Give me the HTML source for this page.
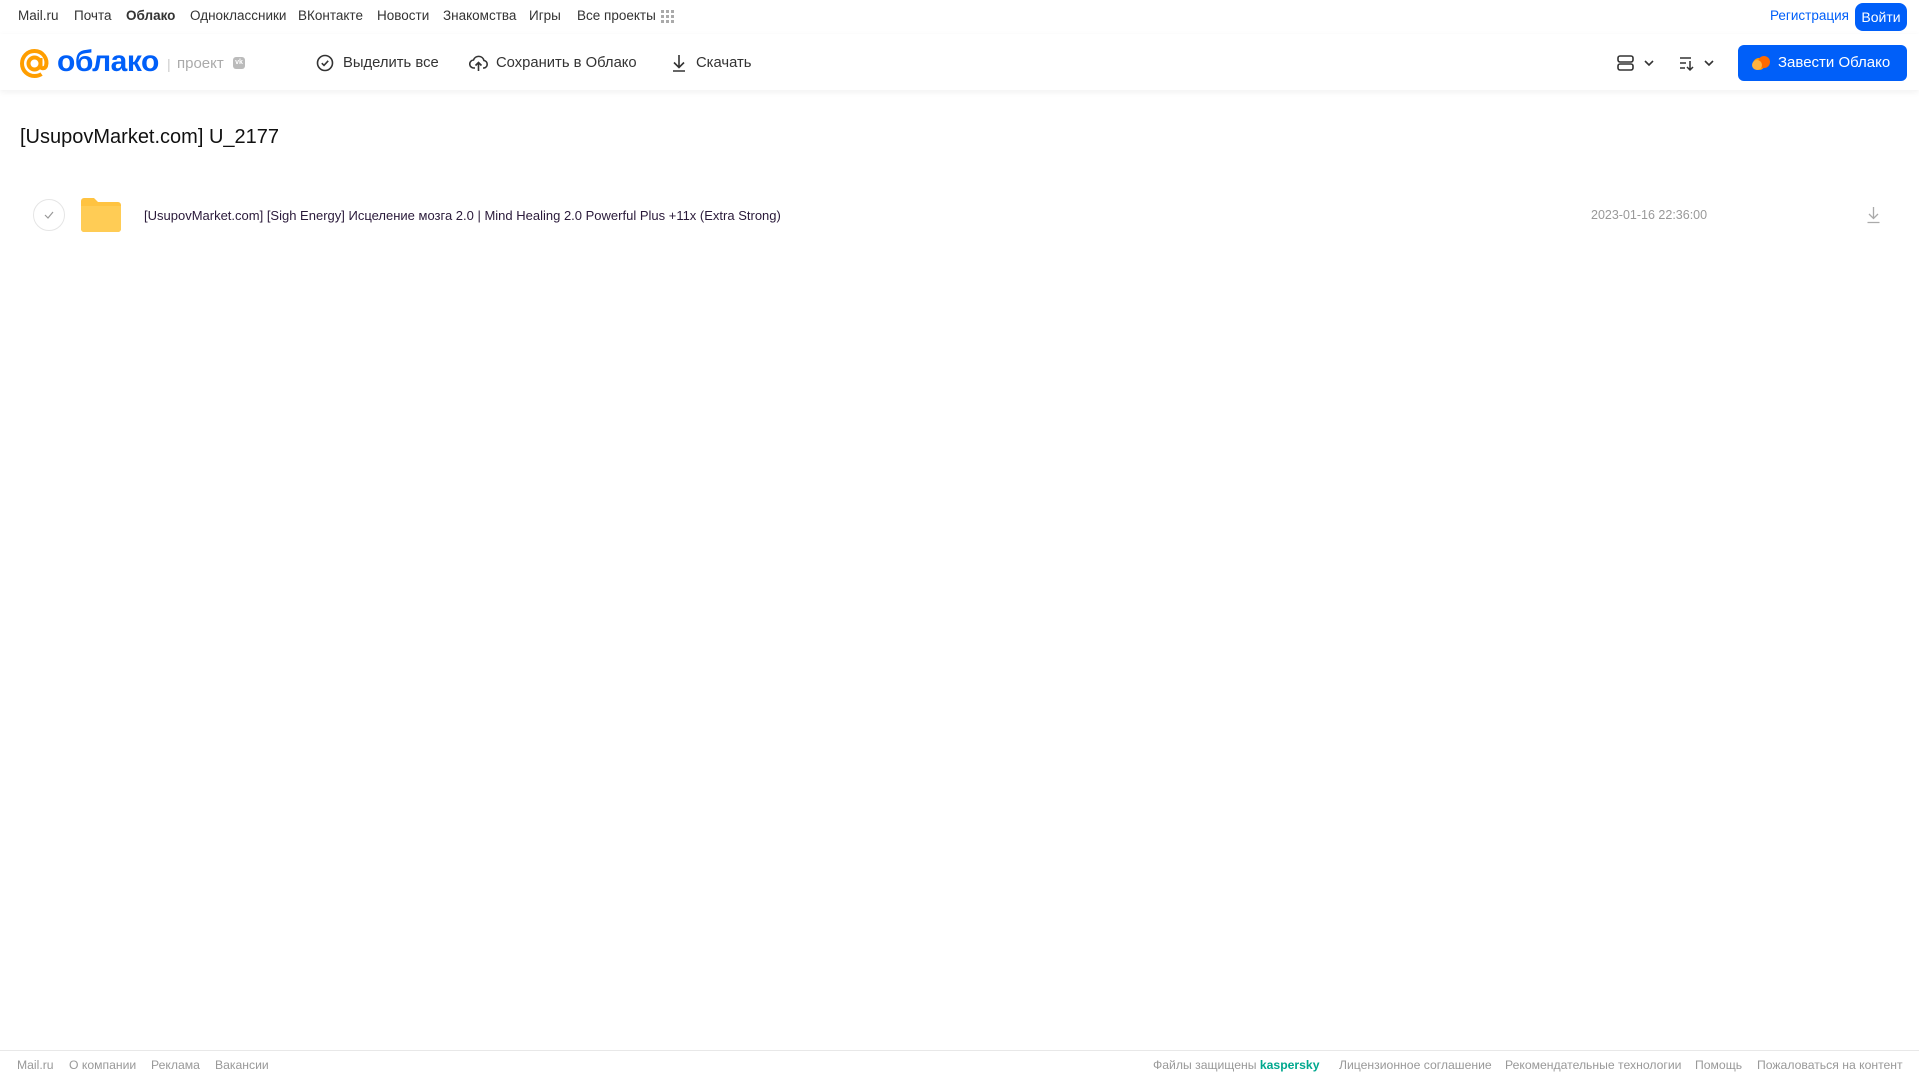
<!DOCTYPE html>
<html><head><meta charset="utf-8"><style>
*{margin:0;padding:0;box-sizing:border-box}
body{width:1919px;height:1079px;background:#fff;font-family:"Liberation Sans",sans-serif;position:relative;overflow:hidden;color:#2c2d2e}
.a{position:absolute;white-space:nowrap}
.top{font-size:13.5px;top:8px;color:#333}
.hdr{position:absolute;left:0;top:34px;width:1919px;height:56px;box-shadow:0 2px 6px rgba(0,0,0,0.06)}
.tb{font-size:14.8px;color:#333;top:55px}
.ft{font-size:12.2px;color:#999;top:1058px}
</style></head><body>
<div class="a top" style="left:18px">Mail.ru</div>
<div class="a top" style="left:74px">Почта</div>
<div class="a top" style="left:126px;font-weight:bold">Облако</div>
<div class="a top" style="left:190px">Одноклассники</div>
<div class="a top" style="left:298px">ВКонтакте</div>
<div class="a top" style="left:377px">Новости</div>
<div class="a top" style="left:443px">Знакомства</div>
<div class="a top" style="left:529px">Игры</div>
<div class="a top" style="left:577px">Все проекты</div>
<svg class="a" style="left:661px;top:10px" width="14" height="14" viewBox="0 0 14 14" fill="#aaa"><rect x="0" y="0" width="3" height="3"/><rect x="5" y="0" width="3" height="3"/><rect x="10" y="0" width="3" height="3"/><rect x="0" y="5" width="3" height="3"/><rect x="5" y="5" width="3" height="3"/><rect x="10" y="5" width="3" height="3"/><rect x="0" y="10" width="3" height="3"/><rect x="5" y="10" width="3" height="3"/><rect x="10" y="10" width="3" height="3"/></svg>
<div class="a" style="left:1770px;top:8px;font-size:13.5px;color:#005ff9">Регистрация</div>
<div class="a" style="left:1855px;top:3px;width:52px;height:28px;background:#005ff9;border-radius:8px;color:#fff;font-size:14px;text-align:center;line-height:28px">Войти</div>
<div class="hdr"></div>
<svg class="a" style="left:18px;top:47px" width="33" height="33" viewBox="0 0 33 33"><circle cx="16.5" cy="16.5" r="6" fill="none" stroke="#ff9e00" stroke-width="4"/><path d="M22.5 11v8c0 3 4.5 3 5.5 0 2-7-3-15-11.5-15C9 4 4 10 4 16.5 4 24 10 29 16.5 29c3 0 5-0.6 7-2" fill="none" stroke="#ff9e00" stroke-width="4"/></svg>
<div class="a" style="left:57px;top:45px;font-size:30px;font-weight:bold;color:#005ff9;letter-spacing:-0.5px">облако</div>
<div class="a" style="left:167px;top:56px;font-size:14px;color:#ccc">|</div>
<div class="a" style="left:177px;top:55px;font-size:15px;color:#aaa">проект</div>
<div class="a" style="left:233px;top:57px;width:12px;height:12px;background:#bbb;border-radius:3px;color:#fff;font-size:7px;text-align:center;line-height:12px;font-weight:bold">vk</div>
<svg class="a" style="left:316px;top:54px" width="18" height="18" viewBox="0 0 18 18"><circle cx="9" cy="9" r="7.5" fill="none" stroke="#333" stroke-width="1.6"/><path d="M5.8 9.2l2.2 2.2 4.2-4.6" fill="none" stroke="#333" stroke-width="1.6"/></svg>
<div class="a tb" style="left:343px">Выделить все</div>
<svg class="a" style="left:469px;top:54px" width="19" height="18" viewBox="0 0 19 18"><path d="M6 14H5a4 4 0 0 1-.5-8A5.5 5.5 0 0 1 15 6.5a3.8 3.8 0 0 1 0 7.5h-1" fill="none" stroke="#333" stroke-width="1.6"/><path d="M9.5 17V9M6.5 11.5l3-3 3 3" fill="none" stroke="#333" stroke-width="1.6"/></svg>
<div class="a tb" style="left:496px">Сохранить в Облако</div>
<svg class="a" style="left:671px;top:54px" width="16" height="18" viewBox="0 0 16 18"><path d="M8 1v12M3 8.5l5 5 5-5M2 17h12" fill="none" stroke="#333" stroke-width="1.6"/></svg>
<div class="a tb" style="left:696px">Скачать</div>
<svg class="a" style="left:1617px;top:54px" width="42" height="18" viewBox="0 0 42 18"><rect x="1" y="2" width="15" height="6" rx="2" fill="none" stroke="#333" stroke-width="1.6"/><rect x="1" y="10" width="15" height="6" rx="2" fill="none" stroke="#333" stroke-width="1.6"/><path d="M28 7l4 4 4-4" fill="none" stroke="#333" stroke-width="1.6"/></svg>
<svg class="a" style="left:1679px;top:54px" width="42" height="18" viewBox="0 0 42 18"><path d="M1 4h11M1 9h6M1 14h5M11 7v9M8 13l3 3 3-3" fill="none" stroke="#333" stroke-width="1.5"/><path d="M26 7l4 4 4-4" fill="none" stroke="#333" stroke-width="1.6"/></svg>
<div class="a" style="left:1738px;top:45px;width:169px;height:36px;background:#005ff9;border-radius:6px"></div>
<svg class="a" style="left:1751px;top:54px" width="20" height="17" viewBox="0 0 20 17"><circle cx="8" cy="10" r="6" fill="#ff9e00"/><circle cx="13" cy="8" r="6" fill="#ff6a00"/><circle cx="6" cy="11" r="5" fill="#ffb340"/></svg>
<div class="a" style="left:1778px;top:54px;font-size:15px;color:#fff">Завести Облако</div>
<div class="a" style="left:20px;top:126px;font-size:20px;color:#111">[UsupovMarket.com] U_2177</div>
<div class="a" style="left:33px;top:199px;width:32px;height:32px;border:1px solid #e5e5e5;border-radius:50%"></div>
<svg class="a" style="left:44px;top:211px" width="10" height="8" viewBox="0 0 10 8"><path d="M1 4l3 3 5-6" fill="none" stroke="#999" stroke-width="1.2"/></svg>
<svg class="a" style="left:81px;top:198px" width="40" height="34" viewBox="0 0 40 34"><path d="M0 3a3 3 0 0 1 3-3h10l4 4h20a3 3 0 0 1 3 3v24a3 3 0 0 1-3 3H3a3 3 0 0 1-3-3z" fill="#ffc341"/><path d="M0 8h40v23a3 3 0 0 1-3 3H3a3 3 0 0 1-3-3z" fill="#ffcc55"/></svg>
<div class="a" style="left:144px;top:208px;font-size:13px;color:#2a1a3a">[UsupovMarket.com] [Sigh Energy] Исцеление мозга 2.0 | Mind Healing 2.0 Powerful Plus +11x (Extra Strong)</div>
<div class="a" style="left:1591px;top:208px;font-size:12.5px;color:#999">2023-01-16 22:36:00</div>
<svg class="a" style="left:1866px;top:206px" width="15" height="18" viewBox="0 0 15 18"><path d="M7.5 1v11M3 8l4.5 4.5L12 8M1.5 16.5h12" fill="none" stroke="#aaa" stroke-width="1.3"/></svg>
<div class="a" style="left:0;top:1050px;width:1919px;height:1px;background:#e8e8e8"></div>
<div class="a ft" style="left:17px">Mail.ru</div>
<div class="a ft" style="left:69px">О компании</div>
<div class="a ft" style="left:151px">Реклама</div>
<div class="a ft" style="left:215px">Вакансии</div>
<div class="a ft" style="left:1153px">Файлы защищены <b style="color:#00a88e">kaspersky</b></div>
<div class="a ft" style="left:1339px">Лицензионное соглашение</div>
<div class="a ft" style="left:1505px">Рекомендательные технологии</div>
<div class="a ft" style="left:1695px">Помощь</div>
<div class="a ft" style="left:1757px">Пожаловаться на контент</div>
</body></html>
